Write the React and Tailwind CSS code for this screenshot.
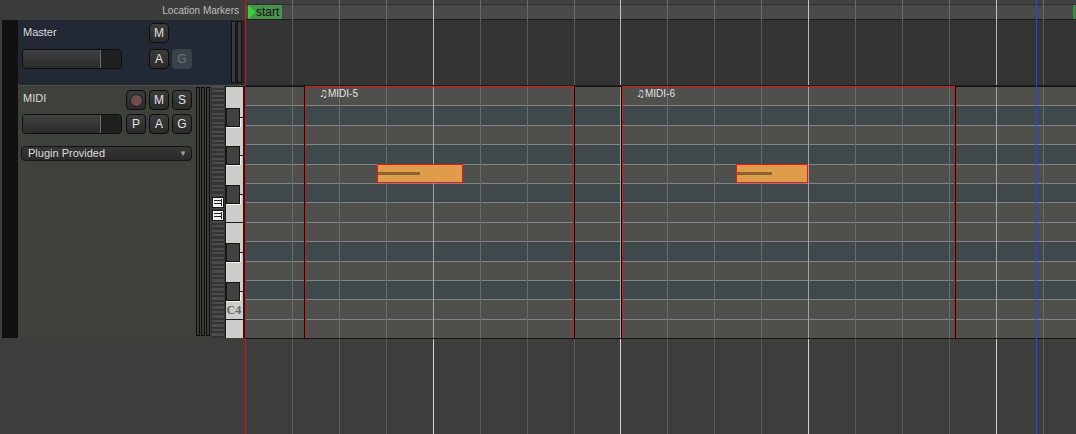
import React from "react";

// vertical grid positions, relative to the editor canvas (starts at x=246)
const GRID_X = Array.from({ length: 17 }, (_, k) => Math.round(45.8 + 46.95 * k) + 0.5);
const KEY_ROWS = ["w", "b", "w", "b", "w", "b", "w", "w", "b", "w", "b", "w", "w"];

function GridLines({ minor, major }) {
  return (
    <svg className="pointer-events-none absolute inset-0 h-full w-full">
      {GRID_X.map((x, k) => (
        <line key={k} x1={x} x2={x} y1="0" y2="100%" stroke={k % 4 === 3 ? major : minor} strokeWidth="1" />
      ))}
    </svg>
  );
}

function Btn({ children, dim }) {
  if (dim) {
    return (
      <div className="flex h-[20px] w-[20px] items-center justify-center rounded-[4px] bg-[#3b4149] text-[12px] text-[#6c7279]">
        {children}
      </div>
    );
  }
  return (
    <div className="flex h-[20px] w-[20px] items-center justify-center rounded-[4px] border border-[#0d0d0d] bg-linear-to-b from-[#3c3c3c] to-[#2b2b2b] text-[12px] text-[#e2e2e2]">
      {children}
    </div>
  );
}

function RecBtn() {
  return (
    <div className="flex h-[20px] w-[20px] items-center justify-center rounded-[4px] border border-[#0d0d0d] bg-linear-to-b from-[#3c3c3c] to-[#2b2b2b]">
      <div className="h-[13px] w-[13px] rounded-full border border-[#1c1c1c] bg-[#6d4b50]" />
    </div>
  );
}

function Fader() {
  return (
    <div className="flex h-[20px] w-[100px] overflow-hidden rounded-[4px] border border-[#0d0d0d]">
      <div className="w-[77px] bg-linear-to-b from-[#414141] to-[#2b2b2b]" />
      <div className="w-[1px] bg-[#6a6a6a]" />
      <div className="flex-1 bg-[#1f1f1f]" />
    </div>
  );
}

function Meter({ w }) {
  return <div className={`h-full border border-[#0e0e0e] bg-[#3b3b3b] ${w}`} />;
}

function StripIcon() {
  return (
    <svg width="12" height="11" className="block">
      <rect x="0.5" y="0.5" width="11" height="10" fill="#f2f2f2" stroke="#1a1a1a" />
      <line x1="2" x2="9" y1="3.5" y2="3.5" stroke="#222" />
      <line x1="2" x2="9" y1="6.5" y2="6.5" stroke="#222" />
      <line x1="9.5" x2="9.5" y1="2" y2="9" stroke="#222" />
    </svg>
  );
}

function Piano() {
  const rh = 251 / 13;
  return (
    <svg width="20" height="252" className="block">
      <rect x="0" y="0" width="20" height="252" fill="#1c1c1c" />
      <rect x="1" y="1" width="17" height="251" fill="#cdcec9" />
      <line x1="1" x2="18" y1={Math.round(1 + rh * 7) + 0.5} y2={Math.round(1 + rh * 7) + 0.5} stroke="#1e1e1e" />
      <line x1="1" x2="18" y1={Math.round(1 + rh * 12) + 0.5} y2={Math.round(1 + rh * 12) + 0.5} stroke="#1e1e1e" />
      {KEY_ROWS.map((k, i) => {
        if (k !== "b") return null;
        const y = Math.round(1 + rh * i + 1.5);
        const h = Math.round(rh - 1);
        const mid = Math.round(y + h / 2) + 0.5;
        return (
          <g key={i}>
            <rect x="1.5" y={y + 0.5} width="13" height={h} fill="#414141" stroke="#151515" />
            <line x1="15.5" x2="15.5" y1={mid} y2={y + h + 1} stroke="#f4f4f4" />
            <line x1="1" x2="15" y1={y + h + 1.5} y2={y + h + 1.5} stroke="#f4f4f4" />
            <line x1="15" x2="18" y1={mid} y2={mid} stroke="#1e1e1e" />
          </g>
        );
      })}
      <text x="1.5" y="228" fontFamily="Liberation Serif, serif" fontWeight="bold" fontSize="12" fill="#686868">
        C4
      </text>
    </svg>
  );
}

function Note({ pos, bar }) {
  return (
    <div className={`absolute top-[77px] h-[19px] border border-[#f01616] bg-[#df9c4b] ${pos}`}>
      <div className={`mt-[7px] h-[3px] bg-[#8c6130] ${bar}`} />
    </div>
  );
}

function RegionLabel({ children }) {
  return (
    <div className="flex items-center text-[10px] leading-none text-[#e4e4e4]">
      <span className="font-['DejaVu_Sans',sans-serif] text-[10px]">♫</span>
      <span>{children}</span>
    </div>
  );
}

export default function App() {
  return (
    <div className="relative flex h-[434px] w-[1076px] flex-col overflow-hidden bg-[#3d3d3d] font-['Liberation_Sans',sans-serif]">
      {/* ruler */}
      <div className="flex h-[20px]">
        <div className="flex w-[245px] items-center justify-end bg-[#3c3c3c] pr-[6px] text-[10px] text-[#bdbdbd]">
          Location Markers
        </div>
        <div className="relative flex flex-1 flex-col border-l border-[#e01010]">
          <div className="h-[4px] bg-[#414141]" />
          <div className="h-[1px] bg-[#2e2e2e]" />
          <div className="flex-1 bg-[#4a4a4a]" />
          <div className="h-[1px] bg-[#1b1b1b]" />
          <GridLines minor="#6b6b6b" major="#c4c4c4" />
          <div className="absolute left-[2px] top-[5px] flex h-[14px] w-[34px] items-center bg-[#4a944e]">
            <svg width="8" height="14" className="block shrink-0">
              <polygon points="0,0 8,7 0,14" fill="#3ad23a" />
            </svg>
            <span className="text-[12px] leading-none text-[#101010]">start</span>
          </div>
          <div className="absolute right-0 top-[5px] h-[14px] w-[3px] bg-[#3e8a44]" />
        </div>
      </div>

      {/* master track */}
      <div className="flex h-[66px]">
        <div className="w-[2px] bg-[#3c3c3c]" />
        <div className="w-[16px] bg-[#111111]" />
        <div className="flex w-[227px] border-b border-[#4c4f4a] bg-[#232934] pl-[4px]">
          <div className="mt-[3px] grid grid-cols-[101px_20px_20px_20px] grid-rows-[20px_20px] gap-x-[3px] gap-y-[6px]">
            <div className="pl-[1px] pt-[4px] text-[11px] leading-none text-[#dcdcdc]">Master</div>
            <div />
            <Btn>M</Btn>
            <div />
            <Fader />
            <div />
            <Btn>A</Btn>
            <Btn dim>G</Btn>
          </div>
          <div className="ml-auto mr-[3px] mt-[1px] flex h-[62px] gap-[1px]">
            <Meter w="w-[5px]" />
            <Meter w="w-[5px]" />
          </div>
        </div>
        <div className="relative flex-1 border-b border-l border-b-[#1e1e1e] border-l-[#e01010] bg-[#343434]">
          <GridLines minor="#5a5a5a" major="#b6b6b6" />
        </div>
      </div>

      {/* midi track */}
      <div className="flex h-[253px] items-start">
        <div className="h-[252px] w-[2px] bg-[#3c3c3c]" />
        <div className="h-[252px] w-[16px] bg-[#111111]" />
        <div className="flex h-[252px] w-[227px]">
          <div className="w-[178px] bg-[#3d4139] pl-[4px] pt-[4px]">
            <div className="grid grid-cols-[101px_20px_20px_20px] grid-rows-[20px_20px] gap-x-[3px] gap-y-[4px]">
              <div className="pl-[1px] pt-[3px] text-[11px] leading-none text-[#dcdcdc]">MIDI</div>
              <RecBtn />
              <Btn>M</Btn>
              <Btn>S</Btn>
              <Fader />
              <Btn>P</Btn>
              <Btn>A</Btn>
              <Btn>G</Btn>
            </div>
            <div className="-ml-[1px] mt-[12px] flex h-[15px] w-[171px] items-center justify-between rounded-[4px] border border-[#141414] bg-linear-to-b from-[#363636] to-[#2a2a2a] pl-[6px] pr-[4px] text-[11px] leading-none text-[#dcdcdc]">
              <span>Plugin Provided</span>
              <span className="text-[8px] text-[#a0a0a0]">▼</span>
            </div>
          </div>
          <div className="flex w-[15px] gap-[1px] bg-[#3d4139] pt-[1px]">
            <div className="flex h-[249px] gap-[1px]">
              <Meter w="w-[4px]" />
              <Meter w="w-[4px]" />
              <Meter w="w-[4px]" />
            </div>
          </div>
          <div className="flex w-[14px] flex-col items-center bg-[#353535] px-[1px]">
            <div className="flex h-full w-full flex-col items-center bg-[image:repeating-linear-gradient(to_bottom,#4b4b4b_0px,#4b4b4b_2px,#343434_2px,#343434_4.5px)] pt-[111px]">
              <StripIcon />
              <div className="mt-[2px]">
                <StripIcon />
              </div>
            </div>
          </div>
          <Piano />
        </div>

        {/* midi lane */}
        <div className="relative flex h-[253px] flex-1 flex-col border-b border-l border-t border-b-[#141414] border-l-[#e01010] border-t-[#141414]">
          {KEY_ROWS.map((k, i) => (
            <div
              key={i}
              className={`flex-1 ${i > 0 ? "border-t border-[#838585]" : ""} ${k === "b" ? "bg-[#3f494c]" : "bg-[#4f4f4b]"}`}
            />
          ))}
          <GridLines minor="#6a6b6a" major="#a3a3a3" />

          <div className="absolute -top-[1px] bottom-0 left-[59px] w-[269px] border-l border-r border-t border-[#e01414] pl-[13px] pt-[2px] shadow-[-1px_0_0_#000,1px_0_0_#000]">
            <RegionLabel>MIDI-5</RegionLabel>
            <Note pos="left-[71px] w-[86px]" bar="w-[42px]" />
          </div>
          <div className="absolute -top-[1px] bottom-0 left-[376px] w-[333px] border-l border-r border-t border-[#e01414] pl-[13px] pt-[2px] shadow-[-1px_0_0_#000,1px_0_0_#000]">
            <RegionLabel>MIDI-6</RegionLabel>
            <Note pos="left-[113px] w-[72px]" bar="w-[35px]" />
          </div>
        </div>
      </div>

      {/* empty area below the tracks */}
      <div className="flex flex-1">
        <div className="w-[245px] bg-[#3d3d3d]" />
        <div className="relative flex-1 border-l border-[#e01010] bg-[#3d3d3d]">
          <GridLines minor="#5c5c5c" major="#d2d2d2" />
        </div>
      </div>

      {/* marker line */}
      <div className="absolute bottom-0 left-[1036px] top-0 w-[1px] bg-[#2f40f0]" />
    </div>
  );
}
